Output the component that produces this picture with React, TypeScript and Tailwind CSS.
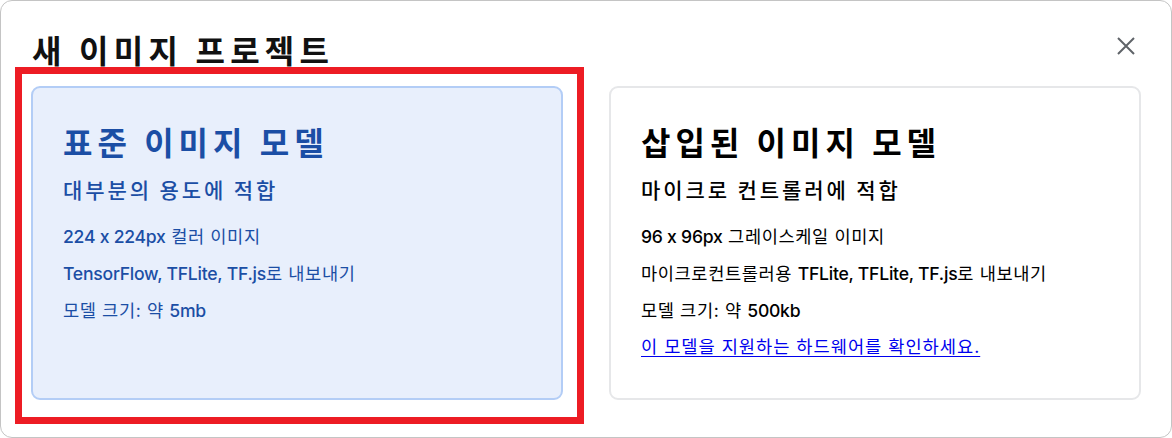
import React from 'react';

const CloseIcon = () => (
    <svg viewBox="0 0 24 24" className="w-[32px] h-[32px]" fill="none" stroke="#5f6368" strokeWidth={1.5}>
        <path d="M6 6l12 12M18 6L6 18" />
    </svg>
);

interface ModelCardProps {
    title: string;
    subtitle: string;
    lines: React.ReactNode[];
    selected?: boolean;
    link?: string;
}

// latin runs: own tracking, no contextual alternates (keeps "x" as x)
const L: React.FC<{ children: React.ReactNode }> = ({ children }) => (
    <span className="tracking-[-0.25px] font-medium">{children}</span>
);

const ModelCard: React.FC<ModelCardProps> = ({ title, subtitle, lines, selected, link }) => (
    <div
        className={`h-[314px] rounded-[9px] border-2 pl-[30px] pt-[33px] ${
            selected ? 'bg-[#e8effc] border-[#b3cdf6] text-[#1b4ea5]' : 'bg-white border-[#e6e7e9] text-black'
        }`}
    >
        <h2 className="font-['Noto_Sans_CJK_KR',sans-serif] text-[32px] leading-[40px] font-bold tracking-[5px]">{title}</h2>
        <h3 className="font-['Noto_Sans_CJK_KR',sans-serif] text-[21px] leading-[28px] font-medium tracking-[2.9px] mt-[14px]">
            {subtitle}
        </h3>
        <ul className="mt-[15px] text-[17.6px] leading-[37px] tracking-[0.6px]">
            {lines.map((l, i) => (
                <li key={i}>{l}</li>
            ))}
            {link && (
                <li className="leading-[36px] tracking-[1px]">
                    <a href="#" className="text-[#0000ee] underline underline-offset-[3px]">{link}</a>
                </li>
            )}
        </ul>
    </div>
);

export default function App() {
    return (
        <div className="w-[1172px] h-[438px] bg-white font-[Inter,'Noto_Sans_CJK_KR',sans-serif] [font-feature-settings:'calt'_0]">
            <div className="relative h-full rounded-[12px] border border-[#c4c4c4] bg-white">
                <div className="flex items-center justify-between h-[40px] mt-[28px] pl-[31px] pr-[29px]">
                    <h1 className="font-['Noto_Sans_CJK_KR',sans-serif] text-[32px] leading-[40px] font-bold tracking-[5.2px] text-[#111]">
                        새 이미지 프로젝트
                    </h1>
                    <button className="mt-[-6px]">
                        <CloseIcon />
                    </button>
                </div>
                <div className="grid grid-cols-2 gap-[46px] px-[30px] mt-[17px]">
                    <ModelCard
                        selected
                        title="표준 이미지 모델"
                        subtitle="대부분의 용도에 적합"
                        lines={[
                            <><L>224 x 224px</L> 컬러 이미지</>,
                            <><L>TensorFlow, TFLite, TF.js</L>로 내보내기</>,
                            <>모델 크기: 약 <L>5mb</L></>,
                        ]}
                    />
                    <ModelCard
                        title="삽입된 이미지 모델"
                        subtitle="마이크로 컨트롤러에 적합"
                        lines={[
                            <><L>96 x 96px</L> 그레이스케일 이미지</>,
                            <>마이크로컨트롤러용 <L>TFLite, TFLite, TF.js</L>로 내보내기</>,
                            <>모델 크기: 약 <L>500kb</L></>,
                        ]}
                        link="이 모델을 지원하는 하드웨어를 확인하세요."
                    />
                </div>
                {/* annotation highlight around the selected card */}
                <div className="absolute left-[14px] top-[66px] w-[569px] h-[357px] border-[7px] border-[#ed1c24] pointer-events-none" />
            </div>
        </div>
    );
}
